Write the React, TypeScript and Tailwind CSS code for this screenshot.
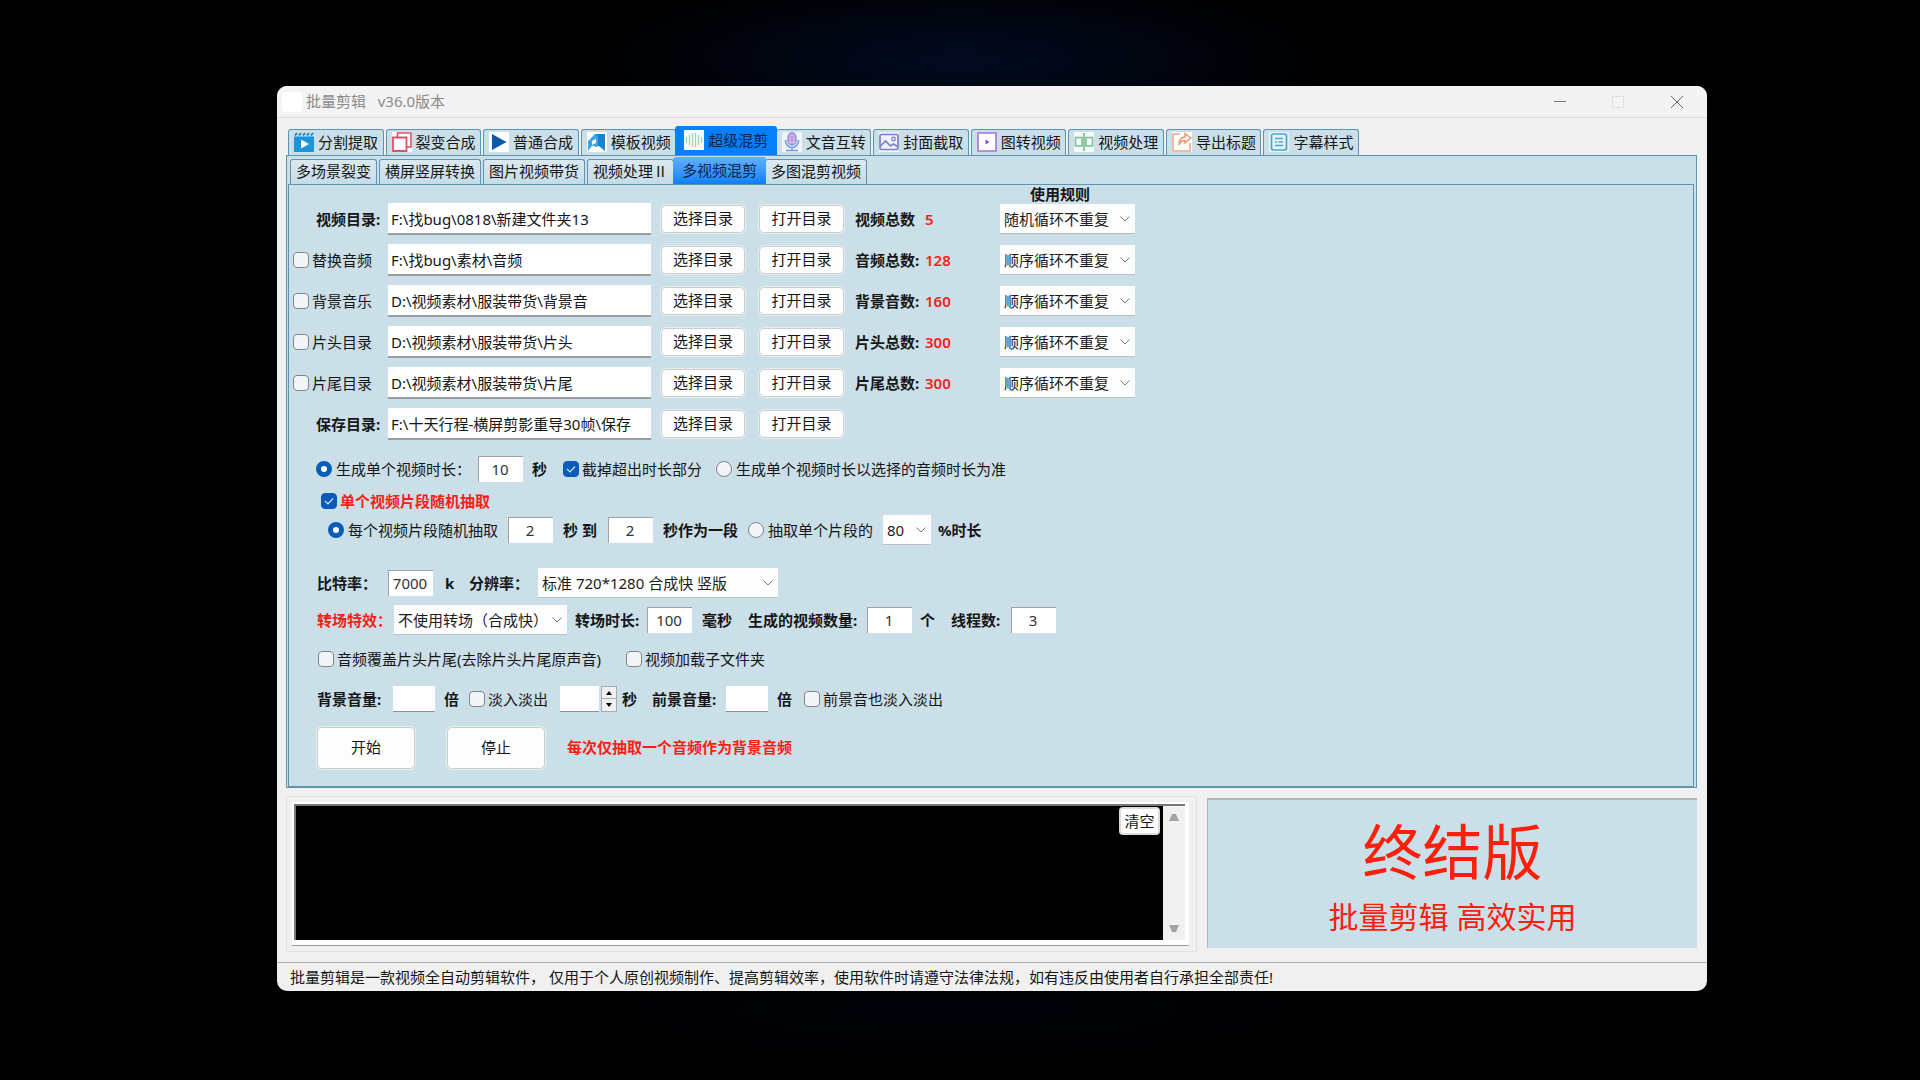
import React, { useId } from 'react';
import clsx from 'clsx';

const mainTabs = [
    { name: '分割提取', icon: 'clapper' },
    { name: '裂变合成', icon: 'squares' },
    { name: '普通合成', icon: 'play' },
    { name: '模板视频', icon: 'bookmark' },
    { name: '超级混剪', icon: 'wave', active: true },
    { name: '文音互转', icon: 'mic' },
    { name: '封面截取', icon: 'image' },
    { name: '图转视频', icon: 'frame' },
    { name: '视频处理', icon: 'mirror' },
    { name: '导出标题', icon: 'share' },
    { name: '字幕样式', icon: 'doc' },
];

const subTabs = [
    { name: '多场景裂变' },
    { name: '横屏竖屏转换' },
    { name: '图片视频带货' },
    { name: '视频处理Ⅱ' },
    { name: '多视频混剪', active: true },
    { name: '多图混剪视频' },
];

const directories = [
    { label: '视频目录:', path: 'F:\\找bug\\0818\\新建文件夹13', countLabel: '视频总数', count: '5', rule: '随机循环不重复' },
    { label: '替换音频', optional: true, path: 'F:\\找bug\\素材\\音频', countLabel: '音频总数:', count: '128', rule: '顺序循环不重复' },
    { label: '背景音乐', optional: true, path: 'D:\\视频素材\\服装带货\\背景音', countLabel: '背景音数:', count: '160', rule: '顺序循环不重复' },
    { label: '片头目录', optional: true, path: 'D:\\视频素材\\服装带货\\片头', countLabel: '片头总数:', count: '300', rule: '顺序循环不重复' },
    { label: '片尾目录', optional: true, path: 'D:\\视频素材\\服装带货\\片尾', countLabel: '片尾总数:', count: '300', rule: '顺序循环不重复' },
    { label: '保存目录:', path: 'F:\\十天行程-横屏剪影重导30帧\\保存' },
];

const icons: Record<string, React.ReactNode> = {
    clapper: (
        <>
            <path d="M0 4.500h20V20H0z" fill="#1a96d8" />
            <path d="M1 3.500l2-2.500M5 3.500L7 1M9 3.500L11 1M13 3.500L15 1M17 3.500L19 1" stroke="#1a7fc0" strokeWidth="1.800" />
            <path d="M7 7.500l8 4.500-8 4.500z" fill="#fff" />
        </>
    ),
    squares: (
        <>
            <path d="M0 0h20v20H0z" fill="#fff" />
            <path d="M5.500 5V1h13.500v14h-4" fill="none" stroke="#dc5068" strokeWidth="1.600" />
            <path d="M1 5.500h13.500V19H1z" fill="#fff" stroke="#dc5068" strokeWidth="1.800" />
        </>
    ),
    play: (
        <>
            <path d="M0 0h20v20H0z" fill="#fff" />
            <path d="M3 2l14.500 8L3 18z" fill="#0c57ae" />
        </>
    ),
    bookmark: (
        <>
            <path d="M0 0h20v20H0z" fill="#fff" />
            <path d="M8 2h10v17l-6-5-4 1z" fill="#1783cc" />
            <path d="M1 9l7-7 3 2v10l-6 0-4 5z" fill="#3aa6e4" />
            <path d="M5 9l4-2v4l-4 2z" fill="#fff" />
        </>
    ),
    wave: (
        <>
            <path d="M0 0h20v20H0z" fill="#fafcfb" />
            <path d="M2.500 7v6M5.500 5v10M8.500 3v14M11.500 3v14M14.500 5v10M17.500 7v6" stroke="#9ed3ac" strokeWidth="1.300" />
        </>
    ),
    mic: (
        <>
            <path d="M0 0h20v20H0z" fill="#f0f5fb" />
            <rect x="6" y="1" width="8" height="12" rx="4" fill="#e3b2de" stroke="#8793dc" strokeWidth="1.300" />
            <path d="M6 5h8M6 8h8M10 1v11" stroke="#9b92dc" strokeWidth=".8" />
            <path d="M3.500 8c0 10 13 10 13 0M10 15v3M4 18.500h12" fill="none" stroke="#6a9fe0" strokeWidth="1.700" />
        </>
    ),
    image: (
        <>
            <path d="M0 0h20v20H0z" fill="#eef2fa" />
            <rect x="1" y="2.500" width="18" height="15" rx="1.500" fill="none" stroke="#7f7fc4" strokeWidth="1.700" />
            <path d="M1.500 14l5-5 5 5 3-2 4 2.500" fill="none" stroke="#7f7fc4" strokeWidth="1.700" />
            <circle cx="14.500" cy="7" r="1.800" fill="none" stroke="#7f7fc4" strokeWidth="1.300" />
        </>
    ),
    frame: (
        <>
            <path d="M1 1h18v18H1z" fill="#fff" stroke="#a872d6" strokeWidth="1.600" />
            <path d="M8.500 7.500l4 2.500-4 2.500z" fill="#8e44c4" />
        </>
    ),
    mirror: (
        <>
            <path d="M0 0h20v20H0z" fill="#f2f8f6" />
            <path d="M1.500 5.500H8v8.500H1.500zM12 5.500h6.500v8.500H12z" fill="none" stroke="#7dbd98" strokeWidth="1.600" />
            <path d="M10 1v18" stroke="#7dbd98" strokeWidth="1.700" />
        </>
    ),
    share: (
        <>
            <path d="M0 0h20v20H0z" fill="#fff" />
            <path d="M8 2H1v17h17V11" fill="none" stroke="#efa584" strokeWidth="1.600" />
            <path d="M7 13c0-5 2-8 6-8V1.500L19 6l-6 5V8.500c-3 0-5 1-6 4.500z" fill="#fff" stroke="#ec936c" strokeWidth="1.400" />
        </>
    ),
    doc: (
        <>
            <path d="M0 0h20v20H0z" fill="#e4f2f9" />
            <rect x="2.500" y="2" width="15" height="16" rx="2" fill="none" stroke="#48a9cd" strokeWidth="1.700" />
            <path d="M6 6.500h8M6 10h2M9.500 10H14M6 13.500h8" stroke="#48a9cd" strokeWidth="1.400" />
        </>
    ),
};

const TabIcon = ({ name }: { name: string }) => (
    <svg viewBox="0 0 20 20" className="size-5 shrink-0" aria-hidden="true">
        {icons[name]}
    </svg>
);

const Caption = ({ children, className, htmlFor }: { children: React.ReactNode; className?: string; htmlFor?: string }) => (
    <label htmlFor={htmlFor} className={clsx('shrink-0 font-bold whitespace-nowrap', className)}>
        {children}
    </label>
);

const CheckOption = (
    {
        label,
        checked,
        className,
    }: {
        label: string;
        checked?: boolean;
        className?: string;
    },
) => (
    <label className={clsx('flex shrink-0 items-center gap-[3px] whitespace-nowrap', className)}>
        <span className="grid size-4 shrink-0">
            <input
                type="checkbox"
                defaultChecked={checked}
                className="peer col-start-1 row-start-1 size-4 appearance-none rounded-[4px] border border-[#7f868b] bg-[#f3f4f6] checked:border-[#0a5cb8] checked:bg-[#0a5cb8]"
            />
            <svg viewBox="0 0 16 16" className="pointer-events-none invisible col-start-1 row-start-1 size-4 peer-checked:visible" aria-hidden="true">
                <path d="M4 8l3 3 5-5.500" fill="none" stroke="#d5e6f8" strokeWidth="1.200" />
            </svg>
        </span>
        {label}
    </label>
);

const RadioOption = (
    {
        label,
        name,
        checked,
        className,
    }: {
        label: string;
        name: string;
        checked?: boolean;
        className?: string;
    },
) => (
    <label className={clsx('flex shrink-0 items-center gap-1 whitespace-nowrap', className)}>
        <input
            type="radio"
            name={name}
            defaultChecked={checked}
            className="size-4 shrink-0 appearance-none rounded-full border border-[#7f868b] bg-[#f3f4f6] checked:border-5 checked:border-[#0a5cb8] checked:bg-white"
        />
        {label}
    </label>
);

const NumberBox = ({ id, label, value, className }: { id?: string; label?: string; value: string; className?: string }) => (
    <input
        id={id}
        type="text"
        aria-label={label}
        defaultValue={value}
        className={clsx('h-[26px] w-[45px] shrink-0 border-t border-l border-[#9aa3a8] bg-white pr-0.5 pb-0.5 text-center text-[#333]', className)}
    />
);

const VolumeBox = ({ id, label, className }: { id?: string; label?: string; className?: string }) => (
    <input
        id={id}
        type="text"
        aria-label={label}
        className={clsx('h-[26px] shrink-0 border-b border-[#8b9094] bg-white px-1', className)}
    />
);

const SelectBox = ({ id, label, value, className }: { id?: string; label?: string; value: string; className?: string }) => (
    <span className={clsx('grid h-[30px] shrink-0 items-center', className)}>
        <select
            id={id}
            aria-label={label}
            defaultValue={value}
            className="col-start-1 row-start-1 h-full w-full appearance-none border-b border-[#b9c0c4] bg-[#fdfdfd] pl-1 text-[#1c1c1c]"
        >
            <option>{value}</option>
        </select>
        <svg viewBox="0 0 10 6" className="pointer-events-none col-start-1 row-start-1 mr-[5px] h-[6px] w-[10px] justify-self-end" aria-hidden="true">
            <path d="M.5 .5L5 5 9.500 .5" fill="none" stroke="#777" />
        </svg>
    </span>
);

const PushButton = ({ children, className }: { children: React.ReactNode; className?: string }) => (
    <button
        type="button"
        className={clsx('shrink-0 rounded-[5px] border border-[#cbced0] bg-[#fdfdfd] pb-0.5 ring-1 ring-[#e6edf1]', className)}
    >
        {children}
    </button>
);

const DirectoryRow = ({ row }: { row: (typeof directories)[number] }) => {
    const id = useId();
    return (
        <div className="flex h-8 items-center">
            {row.optional ? (
                <CheckOption label={row.label} className="ml-1 w-[95px]" />
            ) : (
                <Caption htmlFor={id} className="ml-[27px] w-[72px]">{row.label}</Caption>
            )}
            <input
                id={id}
                type="text"
                aria-label={row.label}
                defaultValue={row.path}
                className="h-8 w-[263px] shrink-0 border-b-2 border-[#999da0] bg-white px-[3px]"
            />
            <PushButton className="ml-[10px] h-7 w-[84px]">选择目录</PushButton>
            <PushButton className="ml-[14px] h-7 w-[85px]">打开目录</PushButton>
            {row.rule && (
                <>
                    <span className="ml-[11px] w-[70px] shrink-0 font-bold whitespace-nowrap">{row.countLabel}</span>
                    <span className="w-[75px] shrink-0 font-semibold text-[#f91e14]">{row.count}</span>
                    <SelectBox label={`${row.label} 使用规则`} value={row.rule} className="w-[135px]" />
                </>
            )}
        </div>
    );
};

const TitleBar = () => (
    <header className="flex h-8 items-center border-b border-[#dcdcdc] bg-[#f3f3f3] pl-[5px] text-[#8a8a8a]">
        <span className="size-5 rounded-sm bg-white" />
        <h1 className="ml-1 flex-1 pb-0.5 whitespace-pre">批量剪辑   v36.0版本</h1>
        <button type="button" aria-label="最小化" className="grid h-8 w-[58px] place-items-center">
            <svg viewBox="0 0 12 12" className="size-3"><path d="M0 5.500h12" stroke="#777" /></svg>
        </button>
        <button type="button" aria-label="最大化" disabled className="grid h-8 w-[58px] place-items-center">
            <svg viewBox="0 0 12 12" className="size-3"><path d="M.5 .5h11v11H.5z" fill="none" stroke="#dedede" /></svg>
        </button>
        <button type="button" aria-label="关闭" className="grid h-8 w-[60px] place-items-center">
            <svg viewBox="0 0 12 12" className="size-3"><path d="M0 0l12 12M12 0L0 12" stroke="#666" /></svg>
        </button>
    </header>
);

const MixSettings = () => (
    <form className="pb-4">
        <div className="flex h-[18px] items-center pl-[741px] font-bold">使用规则</div>
        <div className="flex flex-col gap-[9px]">
            {directories.map((row) => (
                <DirectoryRow key={row.label} row={row} />
            ))}
        </div>

        <div className="mt-4 flex h-[26px] items-center pl-[27px]">
            <RadioOption name="duration" label="生成单个视频时长：" checked className="w-[162px]" />
            <NumberBox label="单个视频时长" value="10" />
            <Caption className="ml-[9px] w-[31px]">秒</Caption>
            <CheckOption label="截掉超出时长部分" checked className="w-[153px]" />
            <RadioOption name="duration" label="生成单个视频时长以选择的音频时长为准" />
        </div>

        <div className="mt-[9px] flex h-5 items-center pl-8">
            <CheckOption label="单个视频片段随机抽取" checked className="font-bold text-[#f91e14]" />
        </div>

        <div className="mt-1 flex h-[30px] items-center pl-[39px]">
            <RadioOption name="segment" label="每个视频片段随机抽取" checked className="w-[180px]" />
            <NumberBox label="最短秒数" value="2" />
            <Caption className="ml-[10px] w-[45px]">秒 到</Caption>
            <NumberBox label="最长秒数" value="2" />
            <Caption className="ml-[10px] w-[85px]">秒作为一段</Caption>
            <RadioOption name="segment" label="抽取单个片段的" className="w-[135px]" />
            <SelectBox id="percent" value="80" className="w-12" />
            <Caption htmlFor="percent" className="ml-[7px]">%时长</Caption>
        </div>

        <div className="mt-[23px] flex h-[30px] items-center pl-7">
            <Caption htmlFor="bitrate" className="w-[71px]">比特率：</Caption>
            <NumberBox id="bitrate" value="7000" />
            <span className="ml-3 w-6 shrink-0 font-bold">k</span>
            <Caption htmlFor="resolution" className="w-[69px]">分辨率：</Caption>
            <SelectBox id="resolution" value="标准 720*1280 合成快 竖版" className="w-[240px]" />
        </div>

        <div className="mt-[7px] flex h-[30px] items-center pl-7">
            <Caption htmlFor="transition" className="w-[77px] text-[#f91e14]">转场特效：</Caption>
            <SelectBox id="transition" value="不使用转场（合成快）" className="w-[173px]" />
            <Caption htmlFor="transition-time" className="ml-[8px] w-[72px]">转场时长:</Caption>
            <NumberBox id="transition-time" value="100" />
            <span className="ml-[10px] w-[46px] shrink-0 font-bold">毫秒</span>
            <Caption htmlFor="video-count" className="w-[119px]">生成的视频数量:</Caption>
            <NumberBox id="video-count" value="1" />
            <span className="ml-2 w-[31px] shrink-0 font-bold">个</span>
            <Caption htmlFor="threads" className="w-[60px]">线程数:</Caption>
            <NumberBox id="threads" value="3" className="w-12" />
        </div>

        <div className="mt-[14px] flex h-5 items-center pl-[29px]">
            <CheckOption label="音频覆盖片头片尾(去除片头片尾原声音)" className="w-[308px]" />
            <CheckOption label="视频加载子文件夹" />
        </div>

        <div className="mt-[17px] flex h-[26px] items-center pl-7">
            <Caption htmlFor="bg-volume" className="w-[76px]">背景音量:</Caption>
            <VolumeBox id="bg-volume" className="w-[42px]" />
            <span className="ml-[9px] w-[25px] shrink-0 font-bold">倍</span>
            <CheckOption label="淡入淡出" className="w-[91px]" />
            <VolumeBox label="淡入淡出秒数" className="w-[39px]" />
            <span className="ml-[2px] grid h-[26px] w-4 shrink-0 grid-rows-2 border border-[#a9adb0] bg-[#f0f0f0]">
                <button type="button" aria-label="增加" className="grid place-items-center border-b border-[#a9adb0]">
                    <svg viewBox="0 0 6 4" className="h-1 w-1.5"><path d="M0 4l3-4 3 4z" /></svg>
                </button>
                <button type="button" aria-label="减少" className="grid place-items-center">
                    <svg viewBox="0 0 6 4" className="h-1 w-1.5"><path d="M0 0l3 4 3-4z" /></svg>
                </button>
            </span>
            <span className="ml-[5px] w-[30px] shrink-0 font-bold">秒</span>
            <Caption htmlFor="fg-volume" className="w-[74px]">前景音量:</Caption>
            <VolumeBox id="fg-volume" className="w-[42px]" />
            <span className="ml-[9px] w-[27px] shrink-0 font-bold">倍</span>
            <CheckOption label="前景音也淡入淡出" />
        </div>

        <div className="mt-[14px] flex h-11 items-center pl-7">
            <PushButton className="h-[42px] w-[98px]">开始</PushButton>
            <PushButton className="ml-8 h-[42px] w-[98px]">停止</PushButton>
            <span className="ml-[22px] pb-0.5 font-bold text-[#f91e14]">每次仅抽取一个音频作为背景音频</span>
        </div>
    </form>
);

const LogPanel = () => (
    <section className="min-w-0 self-start border border-[#dfe1e2] py-[5px] pr-[7px] pl-[5px]">
        <div className="border-b border-[#999] bg-white pt-[2px] pr-1 pb-[5px] pl-[2px]">
            <div className="relative flex h-[136px] border-t-2 border-l-2 border-[#777]">
                <textarea aria-label="日志" readOnly className="h-full min-w-0 flex-1 resize-none bg-black p-1 text-white" />
                <div className="flex w-[22px] flex-col items-center justify-between bg-[#f0f0f0] py-[7px]">
                    <svg viewBox="0 0 10 8" className="h-2 w-[10px]"><path d="M0 8l3-7h4l3 7z" fill="#a3a3a3" /></svg>
                    <svg viewBox="0 0 10 8" className="h-2 w-[10px]"><path d="M0 0l3 7h4l3-7z" fill="#a3a3a3" /></svg>
                </div>
                <button type="button" className="absolute top-px right-[25px] h-7 w-[41px] rounded-sm border-2 border-[#dcdcdc] bg-white">
                    清空
                </button>
            </div>
        </div>
    </section>
);

const App = () => (
    <div className="min-h-screen bg-black bg-[radial-gradient(ellipse_380px_90px_at_50%_60px,#010a20,transparent),radial-gradient(ellipse_420px_60px_at_50%_1010px,#01030a,transparent)] pt-[86px] pr-[213px] pb-[89px] pl-[277px] font-['Noto_Sans','Noto_Sans_CJK_SC',sans-serif] text-[15px] leading-5 text-[#161616]">
        <main className="overflow-hidden rounded-[10px] bg-[#f0f0f0]">
            <TitleBar />

            <div className="pt-[11px] pr-[10px] pl-[9px]">
                <div role="tablist" className="grid h-[26px] w-[1073px] grid-cols-11 gap-0.5 pl-[2px]">
                    {mainTabs.map((tab) => (
                        <button
                            key={tab.name}
                            type="button"
                            role="tab"
                            aria-selected={Boolean(tab.active)}
                            className={clsx(
                                'flex items-center gap-1 pb-0.5 whitespace-nowrap',
                                tab.active
                                    ? 'z-10 -mx-[3px] -mt-[3px] rounded-t-[3px] bg-[#0580fb] pl-[9px] text-[#06264d]'
                                    : 'rounded-t-[3px] border border-b-0 border-[#5d93b5] bg-[#cbdfe8] pl-[5px]',
                            )}
                        >
                            <TabIcon name={tab.icon} />
                            {tab.name}
                        </button>
                    ))}
                </div>

                <div className="border border-[#5d93b5] bg-[#cbdfe8] pt-[3px] pr-[2px] pl-px">
                    <div role="tablist" className="flex h-[25px] gap-0.5 pl-[2px]">
                        {subTabs.map((tab) => (
                            <button
                                key={tab.name}
                                type="button"
                                role="tab"
                                aria-selected={Boolean(tab.active)}
                                className={clsx(
                                    'shrink-0 rounded-t-[3px] pb-0.5 whitespace-nowrap',
                                    tab.active
                                        ? 'z-10 -mx-[3px] -mt-[2px] bg-linear-to-b from-[#62b0fb] to-[#0580fb] px-[9px] text-[#06264d]'
                                        : 'border border-b-0 border-[#5d93b5] bg-linear-to-b from-[#dbe9f0] to-[#c6dbe6] px-[5px]',
                                )}
                            >
                                {tab.name}
                            </button>
                        ))}
                    </div>
                    <div className="border border-[#5d93b5]">
                        <MixSettings />
                    </div>
                </div>

                <div className="mt-2 grid grid-cols-[911fr_490fr] gap-[10px] pb-[10px]">
                    <LogPanel />
                    <section className="mt-[2px] mb-1 flex min-w-0 flex-col items-center border-t-2 border-l border-[#b0b7bb] bg-[#cbdfe8] text-[#fb200c]">
                        <p className="mt-[14px] text-[60px] leading-[76px]">终结版</p>
                        <p className="mt-[7px] text-[30px] leading-[40px]">批量剪辑 高效实用</p>
                    </section>
                </div>
            </div>

            <footer className="flex h-[29px] items-center border-t border-[#b0b0b0] pl-[13px] whitespace-pre">
                批量剪辑是一款视频全自动剪辑软件， 仅用于个人原创视频制作、提高剪辑效率，使用软件时请遵守法律法规，如有违反由使用者自行承担全部责任!
            </footer>
        </main>
    </div>
);

export default App;
